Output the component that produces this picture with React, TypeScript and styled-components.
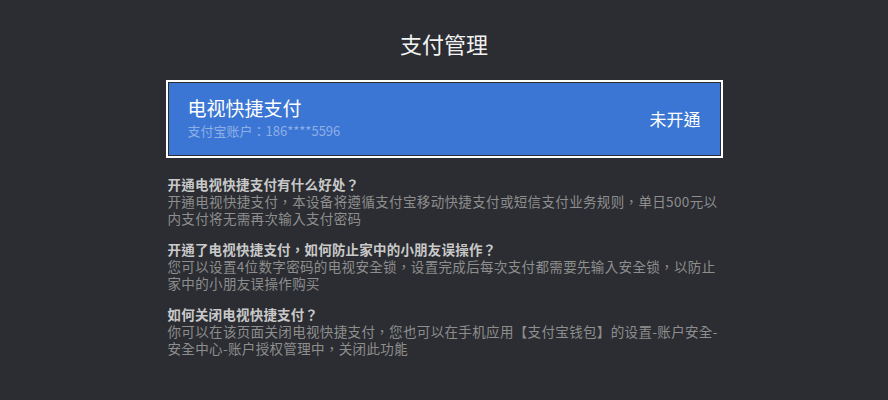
import React from "react";
import styled, { createGlobalStyle } from "styled-components";

const Global = createGlobalStyle`
  html, body {
    margin: 0;
    padding: 0;
    background: #2b2d32;
  }
  body {
    font-family: "Noto Sans CJK TC", "Noto Sans CJK SC", "Noto Sans", sans-serif;
  }
`;

const Page = styled.div`
  width: 888px;
  height: 400px;
  background: #2b2d32;
  display: flex;
  flex-direction: column;
  align-items: center;
  overflow: hidden;
`;

const Title = styled.h1`
  margin: 28px 0 0;
  font-size: 22px;
  line-height: 30px;
  font-weight: 400;
  color: #f2f2f2;
`;

const Column = styled.div`
  width: 557px;
  margin-top: 22px;
`;

const Focus = styled.div`
  border: 2px solid #ffffff;
  padding: 1px;
  background: #2b2d32;
`;

const Card = styled.div`
  height: 72px;
  background: #3b76d4;
  display: flex;
  align-items: center;
  justify-content: space-between;
  padding: 0 19px 0 19px;
`;

const CardText = styled.div`
  display: flex;
  flex-direction: column;
  gap: 2px;
  margin-top: -2px;
`;

const CardTitle = styled.div`
  font-size: 19px;
  line-height: 24px;
  color: #ffffff;
`;

const CardSub = styled.div`
  font-size: 13px;
  line-height: 18px;
  color: #8eaee6;
`;

const Status = styled.div`
  font-size: 17px;
  line-height: 22px;
  color: #ffffff;
`;

const Faq = styled.div`
  margin-top: 18px;
  padding-left: 2px;
  display: flex;
  flex-direction: column;
  gap: 14px;
`;

const Item = styled.div`
  display: flex;
  flex-direction: column;
`;

const Question = styled.div`
  font-size: 13.5px;
  line-height: 17px;
  font-weight: 700;
  color: #c9c9c9;
  letter-spacing: 0.2px;
`;

const Answer = styled.div`
  font-size: 13.5px;
  line-height: 17px;
  letter-spacing: 0.35px;
  color: #8e8e8e;
  white-space: nowrap;
`;

const faqs = [
  {
    q: "开通电视快捷支付有什么好处？",
    a: [
      "开通电视快捷支付，本设备将遵循支付宝移动快捷支付或短信支付业务规则，单日500元以",
      "内支付将无需再次输入支付密码",
    ],
  },
  {
    q: "开通了电视快捷支付，如何防止家中的小朋友误操作？",
    a: [
      "您可以设置4位数字密码的电视安全锁，设置完成后每次支付都需要先输入安全锁，以防止",
      "家中的小朋友误操作购买",
    ],
  },
  {
    q: "如何关闭电视快捷支付？",
    a: [
      "你可以在该页面关闭电视快捷支付，您也可以在手机应用【支付宝钱包】的设置-账户安全-",
      "安全中心-账户授权管理中，关闭此功能",
    ],
  },
];

const App = () => {
  return (
    <Page>
      <Global />
      <Title>支付管理</Title>
      <Column>
        <Focus>
          <Card>
            <CardText>
              <CardTitle>电视快捷支付</CardTitle>
              <CardSub>支付宝账户：186****5596</CardSub>
            </CardText>
            <Status>未开通</Status>
          </Card>
        </Focus>
        <Faq>
          {faqs.map((f) => (
            <Item key={f.q}>
              <Question>{f.q}</Question>
              {f.a.map((line) => (
                <Answer key={line}>{line}</Answer>
              ))}
            </Item>
          ))}
        </Faq>
      </Column>
    </Page>
  );
};

export default App;
